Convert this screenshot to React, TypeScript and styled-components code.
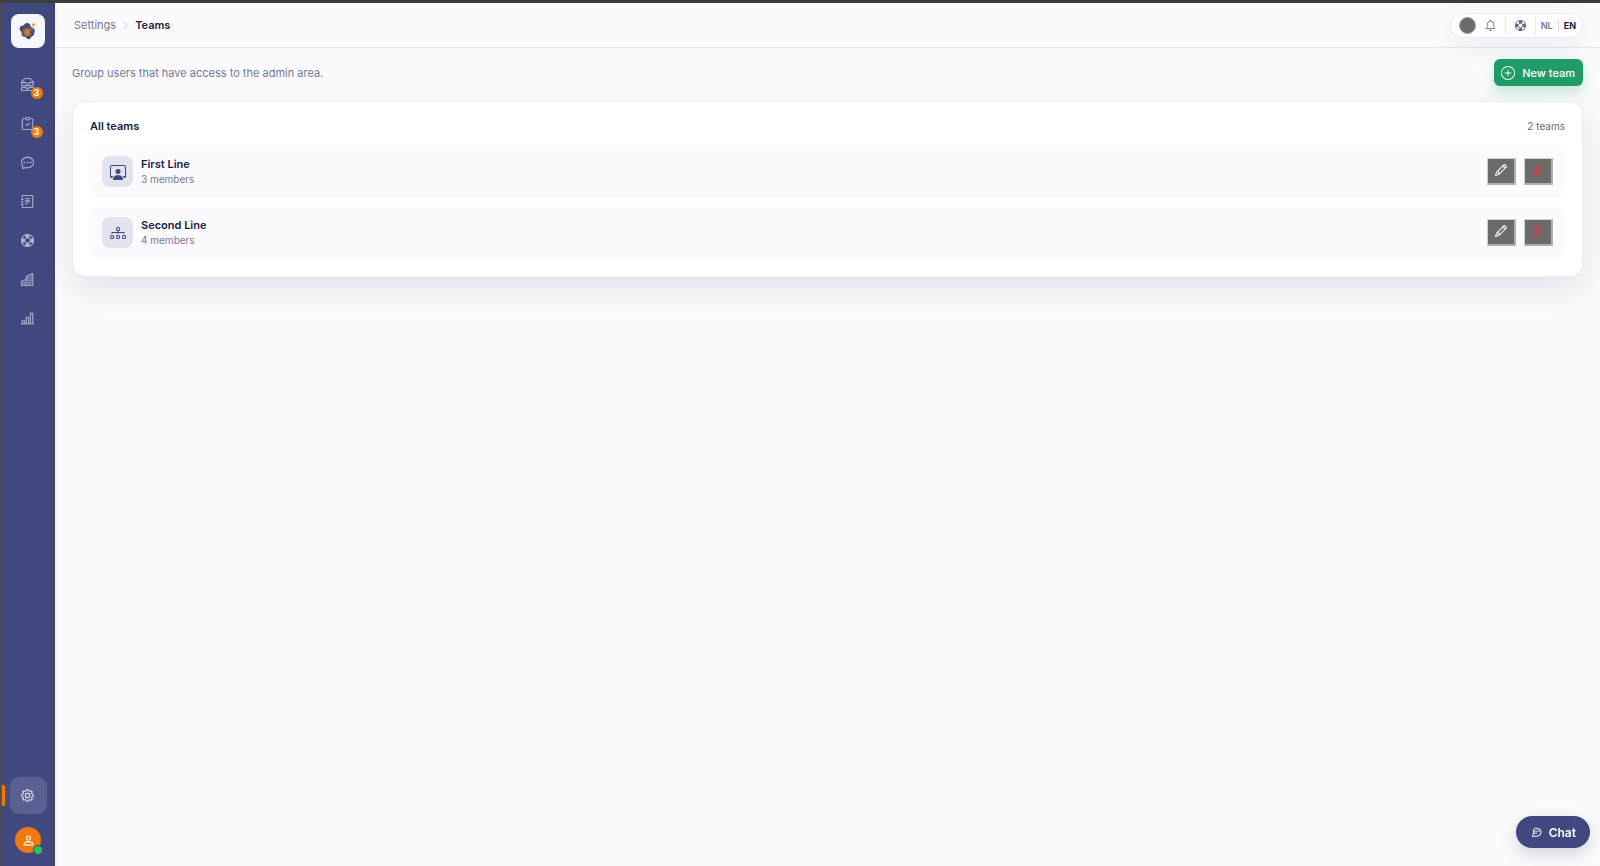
import React from "react";
import styled, { createGlobalStyle } from "styled-components";
import {
  BsInboxes,
  BsClipboardCheck,
  BsChatDots,
  BsJournalText,
  BsLifePreserver,
  BsBuildings,
  BsBarChartLine,
  BsGear,
  BsPerson,
  BsPersonWorkspace,
  BsDiagram3,
  BsPencil,
  BsTrash3,
  BsPlusCircle,
  BsBell,
} from "react-icons/bs";

const navy = "#40487f";
const ink = "#1c2140";
const muted = "#747894";
const orange = "#ee7a0c";

const GlobalStyle = createGlobalStyle`
  *, *::before, *::after { box-sizing: border-box; }
  body {
    margin: 0;
    background: #fbfbfd;
    color: ${ink};
    font-family: Inter, "Liberation Sans", sans-serif;
    font-size: 11px;
  }
  h2, h3, p, ul, ol { margin: 0; padding: 0; }
  ul, ol { list-style: none; }
  button { font-family: inherit; cursor: pointer; }
  a { color: inherit; text-decoration: none; }
`;

const Shell = styled.div`
  display: flex;
  min-height: 100vh;
  border-top: 3px solid #3d3d3d;
  border-left: 1px solid #4a4a4c;
`;

const Sidebar = styled.aside`
  display: flex;
  flex-direction: column;
  align-items: center;
  flex: 0 0 54px;
  padding: 11px 0 13px;
  background: ${navy};
  box-shadow: inset -1px 0 0 #373e76;
`;

const Logo = styled.a`
  display: grid;
  place-items: center;
  width: 34px;
  height: 34px;
  border-radius: 8px;
  background: #f5f7fa;
`;

const NavList = styled.ul`
  display: flex;
  flex-direction: column;
  gap: 2px;
  margin-top: 18px;
  flex: 1;
`;

const NavLink = styled.a<{ $active?: boolean }>`
  position: relative;
  display: grid;
  place-items: center;
  width: 37px;
  height: 37px;
  padding-right: 2px;
  border-radius: 9px;
  font-size: 13px;
  color: ${(p) => (p.$active ? "#e8eaf4" : "#b4b8d3")};
  background: ${(p) => (p.$active ? "#595f90" : "transparent")};
  svg {
    stroke: currentColor;
    stroke-width: 0.3px;
  }
`;

const NavBadge = styled.span`
  position: absolute;
  right: 4px;
  bottom: 4px;
  width: 12px;
  height: 12px;
  border-radius: 50%;
  background: ${orange};
  color: #fff;
  font-size: 9px;
  line-height: 12px;
  font-weight: 700;
  text-align: center;
`;

const ActiveMark = styled.span`
  position: absolute;
  left: -8px;
  top: 8px;
  width: 3px;
  height: 21px;
  border-radius: 0 2px 2px 0;
  background: ${orange};
  box-shadow: 0 0 6px rgba(238, 122, 12, 0.4);
`;

const Avatar = styled.button`
  position: relative;
  display: grid;
  place-items: center;
  width: 26px;
  height: 26px;
  margin-top: 13px;
  padding: 0;
  border: 0;
  border-radius: 50%;
  background: ${orange};
  color: #fff;
  font-size: 13px;
  svg {
    stroke: currentColor;
    stroke-width: 0.3px;
  }
`;

const Presence = styled.span`
  position: absolute;
  right: -2px;
  bottom: -2px;
  width: 10px;
  height: 10px;
  border: 1px solid ${navy};
  border-radius: 50%;
  background: #22c55e;
`;

const Main = styled.div`
  flex: 1;
  min-width: 0;
`;

const Header = styled.header`
  display: flex;
  align-items: center;
  justify-content: space-between;
  height: 45px;
  padding: 0 17px 0 19px;
  border-bottom: 1px solid #e8e8ef;
`;

const Crumbs = styled.ol`
  display: flex;
  align-items: center;
  gap: 7px;
  line-height: 16px;
  color: ${muted};
  [aria-current] {
    color: ${ink};
    font-weight: 600;
  }
  li {
    display: flex;
  }
`;

const Tools = styled.div`
  display: flex;
  align-items: center;
  height: 25px;
  padding: 0 6px 0 8px;
  border: 1px solid #ebebf2;
  border-radius: 13px;
  background: #fdfdfe;
  box-shadow: 0 10px 28px rgba(40, 45, 90, 0.08);
`;

const ThemeButton = styled.button`
  width: 17px;
  height: 17px;
  padding: 0;
  border: 1px solid #a3a3a3;
  border-radius: 50%;
  background: #6b6b6b;
`;

const ToolButton = styled.button`
  display: grid;
  place-items: center;
  width: 30px;
  height: 19px;
  padding: 0;
  border: solid #e6e6ee;
  border-width: 0 1px 0 0;
  background: none;
  color: #5c6280;
  font-size: 11px;
`;

const LangButton = styled.button<{ $current?: boolean }>`
  padding: 0 5px;
  border: 0;
  background: none;
  font-size: 9px;
  line-height: 11px;
  font-weight: ${(p) => (p.$current ? 700 : 600)};
  color: ${(p) => (p.$current ? ink : muted)};
  & + & {
    padding-right: 0;
    border-left: 1px solid #d8d9e4;
  }
`;

const Content = styled.main`
  padding: 11px 17px 24px;
`;

const Intro = styled.div`
  display: flex;
  align-items: center;
  justify-content: space-between;
  margin-bottom: 15px;
  color: ${muted};
`;

const NewTeamButton = styled.button`
  display: flex;
  align-items: center;
  gap: 7px;
  height: 27px;
  padding: 0 8px 0 7px;
  border: 0;
  border-radius: 6px;
  background: #209c69;
  color: #fff;
  font-size: 11px;
  font-weight: 500;
  box-shadow: 0 6px 14px rgba(32, 156, 105, 0.25);
  svg {
    font-size: 14px;
  }
`;

const Card = styled.section`
  padding: 16px 17px 17px;
  border: 1px solid #ececf3;
  border-radius: 13px;
  background: #fff;
  box-shadow: 0 12px 32px rgba(40, 45, 90, 0.12);
`;

const CardHeader = styled.div`
  display: flex;
  align-items: center;
  justify-content: space-between;
  margin-bottom: 11px;
  line-height: 16px;
  h2 {
    font-size: 11px;
    font-weight: 600;
  }
  span {
    font-size: 10px;
    color: #6b6b6f;
  }
`;

const TeamList = styled.ul`
  display: flex;
  flex-direction: column;
  gap: 8px;
`;

const TeamRow = styled.li`
  display: flex;
  align-items: center;
  gap: 8px;
  height: 53px;
  padding: 0 12px;
  border-radius: 9px;
  background: #fbfbfd;
`;

const TeamIcon = styled.span`
  display: grid;
  place-items: center;
  width: 31px;
  height: 31px;
  border-radius: 8px;
  background: #e2e3ed;
  color: ${navy};
  font-size: 16px;
`;

const TeamText = styled.div`
  flex: 1;
  h3 {
    font-size: 11px;
    line-height: 16px;
    font-weight: 600;
  }
  p {
    font-size: 10px;
    line-height: 15px;
    color: ${muted};
  }
`;

const RowActions = styled.div`
  display: flex;
  gap: 8px;
`;

const ActionButton = styled.button<{ $danger?: boolean }>`
  display: grid;
  place-items: center;
  width: 29px;
  height: 27px;
  padding: 0 0 2px;
  border: solid;
  border-width: 1px 2px 2px 1px;
  border-color: #d0d0d0 #b0b0b0 #b0b0b0 #d0d0d0;
  background: #6b6b6b;
  color: ${(p) => (p.$danger ? "#d03c44" : "#fff")};
  font-size: 12px;
  svg {
    stroke: currentColor;
    stroke-width: ${(p) => (p.$danger ? "0" : "0.4px")};
  }
`;

const ChatButton = styled.button`
  position: fixed;
  right: 10px;
  bottom: 18px;
  display: flex;
  align-items: center;
  gap: 7px;
  height: 32px;
  padding: 0 14px 0 15px;
  border: 0;
  border-radius: 16px;
  background: ${navy};
  color: #fff;
  font-size: 12px;
  font-weight: 600;
  box-shadow: 0 6px 18px rgba(40, 45, 90, 0.2);
`;

const LogoMark = () => (
  <svg width="18" height="18" viewBox="0 0 18 18" aria-hidden="true">
    <defs>
      <radialGradient id="glow" gradientUnits="userSpaceOnUse" cx="8" cy="10" r="6">
        <stop offset="0" stopColor="#f58a1f" />
        <stop offset="0.35" stopColor="#c9722c" />
        <stop offset="0.8" stopColor="#4a5070" />
        <stop offset="1" stopColor="#474d6b" />
      </radialGradient>
    </defs>
    <path
      d="M5.500 2.200C6.800.8 9.600.6 10.700 2c.8 1 .8 2.300 1.300 3.200 1.600.3 3 1 3.600 2.400.6 1.500-.2 2.800-.4 3.900 0 1.500-1 2.600-2.500 3l-1.500 1.900c-1 1-2.800 1-3.600-.1l-1-1.300c-1.900.2-3.800-.7-4-2.400-.1-1.100.2-1.900-.4-2.800C1 8.400.1 7 .8 5.500 1.500 4 3 3.300 4.500 3.500z"
      fill="url(#glow)"
    />
    <path d="M9 9.600c.9-1.800 2.500-2.600 5.700-2.300M6 13.500c2.200-1 3.700-.4 5.800-1.200" stroke="#c98045" strokeWidth="0.800" fill="none" />
    <path d="M11 8.800l3.200-1.600 1.300 2-3.500 2.300z" fill="#515878" />
    <rect x="13.200" y="1.500" width="2.400" height="2.400" fill="#f58a1f" />
    <rect x="12" y="4.200" width="1.200" height="1.200" fill="#f7a85a" />
    <rect x="15.800" y="4.300" width="1" height="1" fill="#f7a85a" />
  </svg>
);

const Chevron = () => (
  <svg width="5" height="9" viewBox="0 0 5 9" aria-hidden="true">
    <path d="M.8.8 4.200 4.500.8 8.200" fill="none" stroke="#c5c7d3" />
  </svg>
);

const ChatMark = () => (
  <svg width="11" height="11" viewBox="0 0 11 11" fill="none" stroke="#fff" strokeLinecap="round" strokeLinejoin="round" aria-hidden="true">
    <path d="M2.500 5V3.200C2.500 2 3.500 1.300 4.700 1.300h1.400a3.900 3.900 0 0 1 0 7.900H1c1-.8 1.500-1.900 1.500-4.200z" />
    <path d="M3 4h5.200M3 6.200h2.800" strokeWidth="0.900" />
  </svg>
);

const navItems = [
  { label: "Inbox", Icon: BsInboxes, count: 3 },
  { label: "Tasks", Icon: BsClipboardCheck, count: 3 },
  { label: "Conversations", Icon: BsChatDots },
  { label: "Journal", Icon: BsJournalText },
  { label: "Support", Icon: BsLifePreserver },
  { label: "Organisations", Icon: BsBuildings },
  { label: "Reports", Icon: BsBarChartLine },
];

const teams = [
  { name: "First Line", members: 3, Icon: BsPersonWorkspace },
  { name: "Second Line", members: 4, Icon: BsDiagram3 },
];

export default function App() {
  return (
    <>
      <GlobalStyle />
      <Shell>
        <Sidebar>
          <Logo href="#" aria-label="Home">
            <LogoMark />
          </Logo>
          <NavList>
            {navItems.map(({ label, Icon, count }) => (
              <li key={label}>
                <NavLink href="#" aria-label={label}>
                  <Icon />
                  {count && <NavBadge>{count}</NavBadge>}
                </NavLink>
              </li>
            ))}
          </NavList>
          <NavLink href="#" aria-label="Settings" $active>
            <ActiveMark />
            <BsGear />
          </NavLink>
          <Avatar aria-label="Profile">
            <BsPerson />
            <Presence />
          </Avatar>
        </Sidebar>
        <Main>
          <Header>
            <nav aria-label="Breadcrumb">
              <Crumbs>
                <li>
                  <a href="#">Settings</a>
                </li>
                <li>
                  <Chevron />
                </li>
                <li aria-current="page">Teams</li>
              </Crumbs>
            </nav>
            <Tools>
              <ThemeButton aria-label="Theme" />
              <ToolButton aria-label="Notifications">
                <BsBell />
              </ToolButton>
              <ToolButton aria-label="Help">
                <BsLifePreserver />
              </ToolButton>
              <LangButton>NL</LangButton>
              <LangButton $current>EN</LangButton>
            </Tools>
          </Header>
          <Content>
            <Intro>
              <p>Group users that have access to the admin area.</p>
              <NewTeamButton>
                <BsPlusCircle />
                New team
              </NewTeamButton>
            </Intro>
            <Card>
              <CardHeader>
                <h2>All teams</h2>
                <span>2 teams</span>
              </CardHeader>
              <TeamList>
                {teams.map(({ name, members, Icon }) => (
                  <TeamRow key={name}>
                    <TeamIcon>
                      <Icon />
                    </TeamIcon>
                    <TeamText>
                      <h3>{name}</h3>
                      <p>{members} members</p>
                    </TeamText>
                    <RowActions>
                      <ActionButton aria-label={`Edit ${name}`}>
                        <BsPencil />
                      </ActionButton>
                      <ActionButton aria-label={`Delete ${name}`} $danger>
                        <BsTrash3 />
                      </ActionButton>
                    </RowActions>
                  </TeamRow>
                ))}
              </TeamList>
            </Card>
          </Content>
        </Main>
      </Shell>
      <ChatButton>
        <ChatMark />
        Chat
      </ChatButton>
    </>
  );
}
